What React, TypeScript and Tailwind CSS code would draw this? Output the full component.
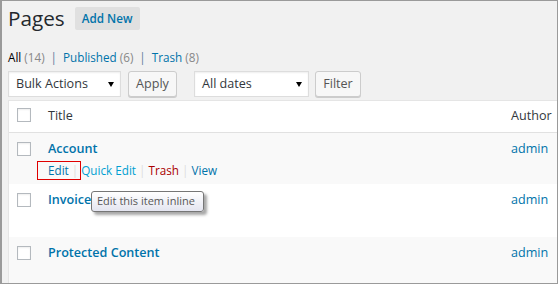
const font = { fontFamily: '"Open Sans", "Noto Sans", sans-serif' }

function Checkbox() {
  return <div className="h-[14px] w-[14px] border border-[#b4b9be] bg-white shadow-[inset_0_1px_2px_rgba(0,0,0,0.07)]" />
}

function Select({ label, width }: { label: string; width: string }) {
  return (
    <div
      className={`flex h-[26px] ${width} items-center justify-between border border-[#ddd] bg-white pl-[7px] pr-[6px] text-[12.6px] text-[#32373c] shadow-[inset_0_1px_2px_rgba(0,0,0,0.07)]`}
    >
      <span>{label}</span>
      <svg width="6" height="5" viewBox="0 0 6 5">
        <polygon points="0,0 6,0 3,5" fill="#000" />
      </svg>
    </div>
  )
}

function Button({ label, width }: { label: string; width: string }) {
  return (
    <div
      className={`flex h-[26px] ${width} items-center justify-center rounded-[3px] border border-[#ccc] bg-[#f7f7f7] text-[12.6px] text-[#555] shadow-[0_1px_0_#ccc]`}
    >
      {label}
    </div>
  )
}

function Row({
  title,
  height,
  striped,
  actions,
}: {
  title: string
  height: string
  striped?: boolean
  actions?: boolean
}) {
  return (
    <div className={`grid ${height} grid-cols-[39px_1fr_46px] ${striped ? 'bg-[#f9f9f9]' : 'bg-white'}`}>
      <div className="pl-[8px] pt-[9px]">
        <Checkbox />
      </div>
      <div className="pt-[6px]">
        <div className="text-[12.6px] font-semibold leading-[19px] text-[#0073aa]">{title}</div>
        {actions && (
          <div className="mt-[3px] text-[11.7px] leading-[18px] text-[#ddd]">
            <span className="text-[#0073aa]">Edit</span> |{' '}
            <span className="text-[#00a0d2]">Quick Edit</span> |{' '}
            <span className="text-[#a00]">Trash</span> | <span className="text-[#0073aa]">View</span>
          </div>
        )}
      </div>
      <div className="pt-[6px] text-[12.6px] leading-[19px] text-[#0073aa]">admin</div>
    </div>
  )
}

function Sep() {
  return <span className="px-[6px] text-[#5b7a99]">|</span>
}

export default function App() {
  return (
    <div
      style={font}
      className="relative h-[284px] w-[558px] overflow-hidden border border-l-2 border-[#9a9a9a] bg-[#f1f1f1]"
    >
      <div className="pl-[6px] pt-[3px]">
        <div className="flex items-start gap-[10px]">
          <h1 className="text-[20.7px] leading-[28px] text-[#23282d]">Pages</h1>
          <div className="mt-[3px] flex h-[23px] w-[65px] items-center justify-center rounded-[2px] bg-[#e0e0e0] text-[11.7px] font-semibold text-[#0073aa]">
            Add New
          </div>
        </div>

        <div className="mt-[16px] text-[11.7px] leading-[18px]">
          <span className="text-black">All</span> <span className="text-[#888]">(14)</span>
          <Sep />
          <span className="text-[#0073aa]">Published</span> <span className="text-[#888]">(6)</span>
          <Sep />
          <span className="text-[#0073aa]">Trash</span> <span className="text-[#888]">(8)</span>
        </div>

        <div className="mt-[5px] flex items-center">
          <Select label="Bulk Actions" width="w-[113px]" />
          <div className="ml-[7px]">
            <Button label="Apply" width="w-[49px]" />
          </div>
          <div className="ml-[17px]">
            <Select label="All dates" width="w-[115px]" />
          </div>
          <div className="ml-[6px]">
            <Button label="Filter" width="w-[46px]" />
          </div>
        </div>

        <div className="mt-[3px] border-l border-t border-[#e5e5e5] bg-white">
          <div className="grid h-[32px] grid-cols-[39px_1fr_46px] border-b border-[#e1e1e1]">
            <div className="pl-[8px] pt-[7px]">
              <Checkbox />
            </div>
            <div className="pt-[5px] text-[12.6px] leading-[20px] text-[#32373c]">Title</div>
            <div className="pt-[5px] text-[12.6px] leading-[20px] text-[#32373c]">Author</div>
          </div>
          <Row title="Account" height="h-[51px]" striped actions />
          <Row title="Invoice" height="h-[53px]" />
          <Row title="Protected Content" height="h-[60px]" striped />
        </div>
      </div>

      {/* annotation box around the Edit link */}
      <div className="absolute left-[35px] top-[160px] h-[19px] w-[44px] border border-[#e00000]" />

      {/* tooltip */}
      <div className="absolute left-[89px] top-[190px] flex h-[21px] w-[113px] items-center rounded-[3px] border border-[#767676] bg-gradient-to-b from-white to-[#e4e5f0] pl-[5px] text-[11px] text-[#575757] shadow-[3px_3px_3px_rgba(0,0,0,0.35)]">
        Edit this item inline
      </div>
    </div>
  )
}
